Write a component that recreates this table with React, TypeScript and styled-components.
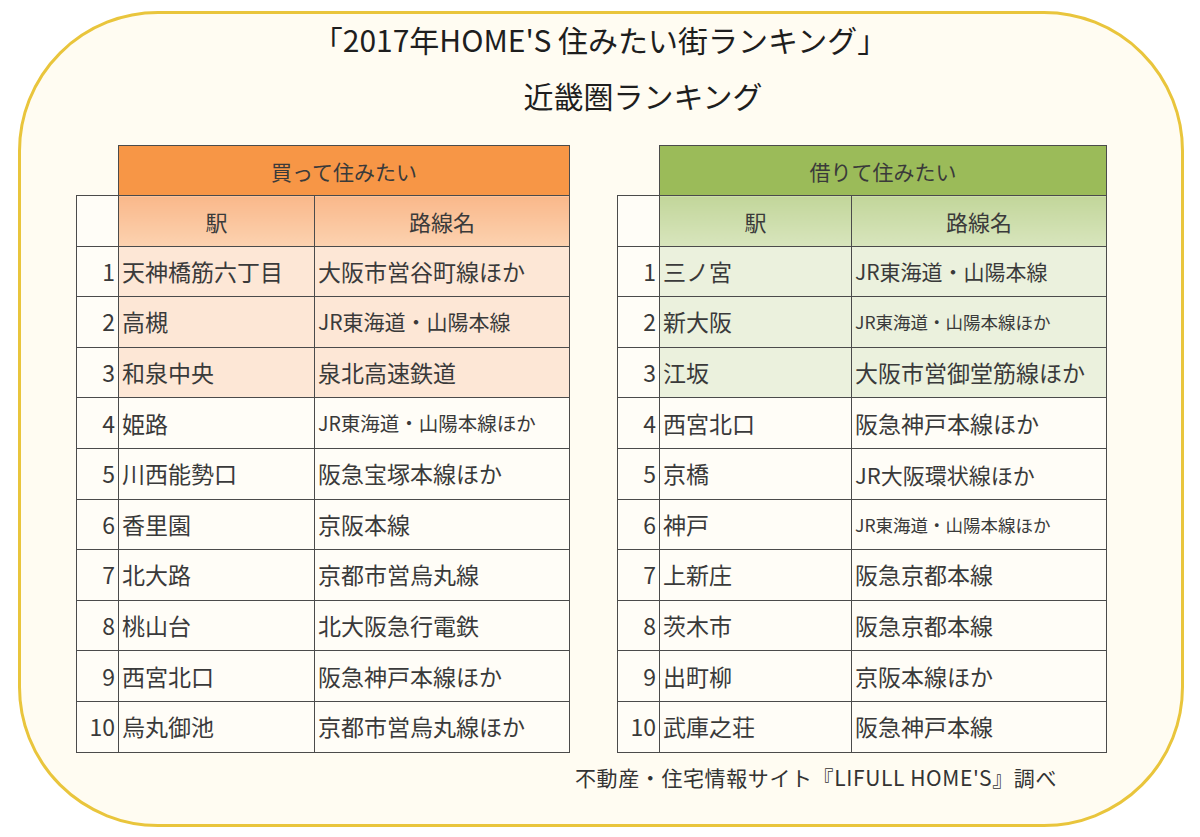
import styled, { createGlobalStyle } from 'styled-components';

const GlobalStyle = createGlobalStyle`
  html, body {
    margin: 0;
    padding: 0;
    background: #ffffff;
  }
  body {
    font-family: "Noto Sans CJK JP", "Noto Sans", sans-serif;
    color: #333;
  }
`;

type Theme = {
  head: string;
  subTop: string;
  subBottom: string;
  hi: string;
};

const orange: Theme = {
  head: '#f79646',
  subTop: '#f9b88a',
  subBottom: '#fcd2b0',
  hi: '#fde7d6',
};

const green: Theme = {
  head: '#9bbb59',
  subTop: '#c2d69a',
  subBottom: '#d8e5bd',
  hi: '#ebf1dd',
};

type Row = {
  station: string;
  line: string;
  small?: number;
};

const buyRows: Row[] = [
  { station: '天神橋筋六丁目', line: '大阪市営谷町線ほか' },
  { station: '高槻', line: 'JR東海道・山陽本線', small: 21 },
  { station: '和泉中央', line: '泉北高速鉄道' },
  { station: '姫路', line: 'JR東海道・山陽本線ほか', small: 19.5 },
  { station: '川西能勢口', line: '阪急宝塚本線ほか' },
  { station: '香里園', line: '京阪本線' },
  { station: '北大路', line: '京都市営烏丸線' },
  { station: '桃山台', line: '北大阪急行電鉄' },
  { station: '西宮北口', line: '阪急神戸本線ほか' },
  { station: '烏丸御池', line: '京都市営烏丸線ほか' },
];

const rentRows: Row[] = [
  { station: '三ノ宮', line: 'JR東海道・山陽本線', small: 21 },
  { station: '新大阪', line: 'JR東海道・山陽本線ほか', small: 17.5 },
  { station: '江坂', line: '大阪市営御堂筋線ほか' },
  { station: '西宮北口', line: '阪急神戸本線ほか' },
  { station: '京橋', line: 'JR大阪環状線ほか', small: 22 },
  { station: '神戸', line: 'JR東海道・山陽本線ほか', small: 17.5 },
  { station: '上新庄', line: '阪急京都本線' },
  { station: '茨木市', line: '阪急京都本線' },
  { station: '出町柳', line: '京阪本線ほか' },
  { station: '武庫之荘', line: '阪急神戸本線' },
];

const Frame = styled.div`
  box-sizing: border-box;
  margin: 11px 0 0 18px;
  width: 1166px;
  height: 816px;
  border: 3px solid #e9c53c;
  border-radius: 140px;
  background: #fffcf2;
  display: flex;
  flex-direction: column;
`;

const Title = styled.h1`
  margin: 5px 0 0 0;
  text-align: center;
  font-size: 30px;
  font-weight: 400;
  line-height: 40px;
  color: #1e1e1e;
  padding-right: 2px;
`;

const SubTitle = styled.h2`
  margin: 16px 0 0 0;
  text-align: center;
  font-size: 30px;
  font-weight: 400;
  line-height: 40px;
  color: #1e1e1e;
  padding-left: 84px;
`;

const Tables = styled.div`
  display: flex;
  gap: 47px;
  margin: 30px 0 0 55px;
  align-items: flex-start;
`;

const Table = styled.table<{ $stationW: number }>`
  border-collapse: collapse;
  table-layout: fixed;
  width: ${(p) => 42 + p.$stationW + 255}px;
  col.idx { width: 42px; }
  col.st { width: ${(p) => p.$stationW}px; }
  col.ln { width: 255px; }
`;

const Cell = styled.td`
  border: 1.5px solid #4b4b4b;
  height: 49.6px;
  padding: 0 0 0 3px;
  font-size: 23px;
  line-height: 1;
  color: #3a3a3a;
  white-space: nowrap;
  overflow: hidden;
`;

const Corner = styled.td`
  border: none;
  height: 49px;
  padding: 0;
`;

const Head = styled.td<{ $t: Theme }>`
  border: 1.5px solid #4b4b4b;
  background: ${(p) => p.$t.head};
  height: 49px;
  padding: 0;
  text-align: center;
  font-size: 21px;
  color: #3a3a3a;
`;

const SubHead = styled(Cell)<{ $t: Theme }>`
  background: ${(p) => `linear-gradient(${p.$t.subTop}, ${p.$t.subBottom})`};
  text-align: center;
  font-size: 22px;
  padding: 0;
`;

const IdxCell = styled(Cell)`
  text-align: right;
  padding: 0 3px 0 0;
  background: #fffdf7;
`;

const DataCell = styled(Cell)<{ $bg: string; $size?: number }>`
  background: ${(p) => p.$bg};
  font-size: ${(p) => (p.$size ? `${p.$size}px` : '23px')};
`;

const Footer = styled.div`
  margin: 10px 0 0 554px;
  font-size: 21px;
  line-height: 28px;
  color: #333;
  letter-spacing: 0.6px;
`;

const RankTable = ({ title, theme, rows, stationW }: { title: string; theme: Theme; rows: Row[]; stationW: number }) => (
  <Table $stationW={stationW}>
    <colgroup>
      <col className="idx" />
      <col className="st" />
      <col className="ln" />
    </colgroup>
    <tbody>
      <tr>
        <Corner />
        <Head $t={theme} colSpan={2}>{title}</Head>
      </tr>
      <tr>
        <IdxCell />
        <SubHead $t={theme}>駅</SubHead>
        <SubHead $t={theme}>路線名</SubHead>
      </tr>
      {rows.map((r, i) => {
        const bg = i < 3 ? theme.hi : '#fffdf7';
        return (
          <tr key={i}>
            <IdxCell>{i + 1}</IdxCell>
            <DataCell $bg={bg}>{r.station}</DataCell>
            <DataCell $bg={bg} $size={r.small}>{r.line}</DataCell>
          </tr>
        );
      })}
    </tbody>
  </Table>
);

export default function App() {
  return (
    <>
      <GlobalStyle />
      <Frame>
        <Title>「2017年HOME'S 住みたい街ランキング」</Title>
        <SubTitle>近畿圏ランキング</SubTitle>
        <Tables>
          <RankTable title="買って住みたい" theme={orange} rows={buyRows} stationW={196} />
          <RankTable title="借りて住みたい" theme={green} rows={rentRows} stationW={192} />
        </Tables>
        <Footer>不動産・住宅情報サイト『LIFULL HOME'S』調べ</Footer>
      </Frame>
    </>
  );
}
